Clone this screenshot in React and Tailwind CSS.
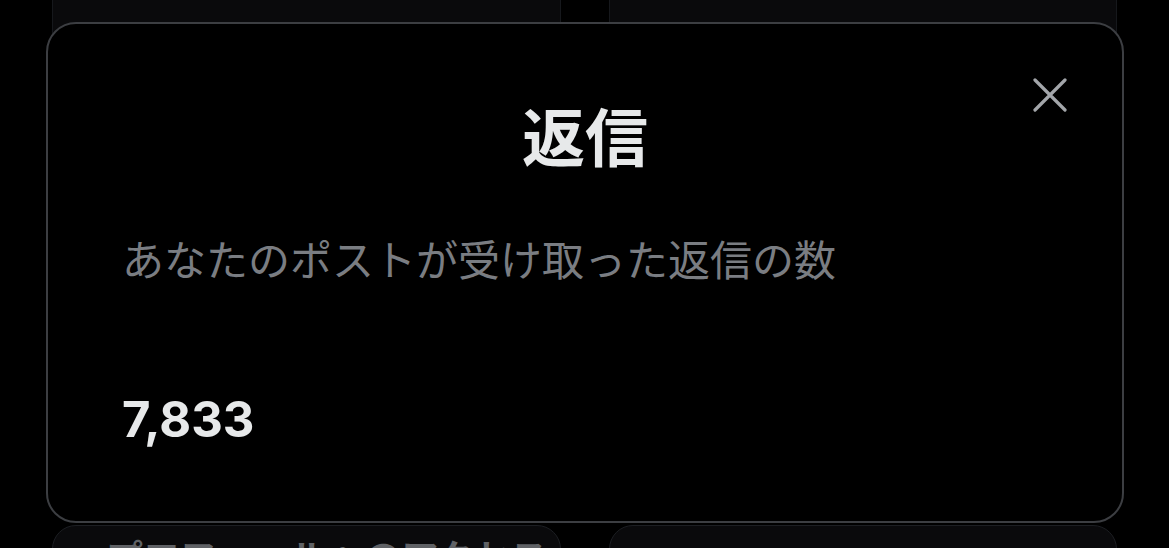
const jp = { fontFamily: '"Noto Sans CJK JP", "Noto Sans", sans-serif' };
const num = { fontFamily: 'Inter, "Liberation Sans", Arial, sans-serif' };

function CloseIcon() {
  return (
    <svg width="34" height="34" viewBox="0 0 34 34" fill="none" stroke="#a3a6aa" strokeWidth="3.2" strokeLinecap="round">
      <path d="M2 2 L32 32 M32 2 L2 32" />
    </svg>
  );
}

export default function App() {
  return (
    <div className="relative h-[548px] w-[1169px] overflow-hidden bg-black" style={jp}>
      {/* cards in the page behind the sheet */}
      <div className="-mt-[40px] grid grid-cols-2 gap-x-[48px] gap-y-[22px] px-[52px]">
        <div className="h-[543px] rounded-[24px] border border-[#16181c] bg-[#0a0a0c] pt-[34px] pl-[53px]">
          <div className="h-[5px] w-[30px] bg-[#4a4a4e]" />
        </div>
        <div className="h-[543px] rounded-[24px] border border-[#16181c] bg-[#0a0a0c]" />
        <div className="h-[80px] rounded-[24px] border border-[#1c1e22] bg-[#0a0a0c] px-[53px] pt-[12px]">
          <p className="whitespace-nowrap text-[37px] font-bold leading-none text-[#606266]">プロフィールへのアクセス</p>
        </div>
        <div className="h-[80px] rounded-[24px] border border-[#1c1e22] bg-[#0a0a0c]" />
      </div>

      {/* info sheet */}
      <div className="absolute left-[46px] top-[22px] h-[501px] w-[1078px] rounded-[30px] border-2 border-[#3c3e42] bg-black px-[74px] pt-[66px]">
        <div className="relative flex justify-center">
          <h2 className="text-[63px] font-bold leading-[88px] text-[#e7e9ea]">返信</h2>
          <button className="absolute -right-[19px] -top-[12px] flex h-[34px] w-[34px] items-center justify-center">
            <CloseIcon />
          </button>
        </div>
        <p className="mt-[52px] text-[42px] leading-[56px] text-[#7a7d82]">あなたのポストが受け取った返信の数</p>
        <p className="mt-[102px] text-[49px] font-bold leading-[64px] text-[#e7e9ea]" style={num}>7,833</p>
      </div>
    </div>
  );
}
